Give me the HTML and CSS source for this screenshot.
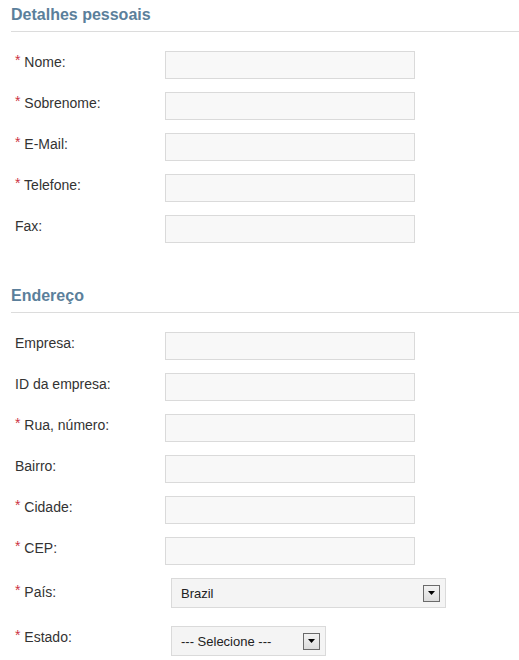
FILE: index.html
```html
<!DOCTYPE html>
<html>
<head>
<meta charset="utf-8">
<link rel="stylesheet" href="styles.css">
</head>
<body>
<div class="page">
  <section class="section">
    <h2 class="heading">Detalhes pessoais</h2>
    <div class="rows">
      <div class="row"><label class="label"><span class="req">*</span> Nome:</label><input class="field" type="text"></div>
      <div class="row"><label class="label"><span class="req">*</span> Sobrenome:</label><input class="field" type="text"></div>
      <div class="row"><label class="label"><span class="req">*</span> E-Mail:</label><input class="field" type="text"></div>
      <div class="row"><label class="label"><span class="req">*</span> Telefone:</label><input class="field" type="text"></div>
      <div class="row"><label class="label">Fax:</label><input class="field" type="text"></div>
    </div>
  </section>
  <section class="section second">
    <h2 class="heading">Endereço</h2>
    <div class="rows">
      <div class="row"><label class="label">Empresa:</label><input class="field" type="text"></div>
      <div class="row"><label class="label">ID da empresa:</label><input class="field" type="text"></div>
      <div class="row"><label class="label"><span class="req">*</span> Rua, número:</label><input class="field" type="text"></div>
      <div class="row"><label class="label">Bairro:</label><input class="field" type="text"></div>
      <div class="row"><label class="label"><span class="req">*</span> Cidade:</label><input class="field" type="text"></div>
      <div class="row"><label class="label"><span class="req">*</span> CEP:</label><input class="field" type="text"></div>
      <div class="row row-select"><label class="label"><span class="req">*</span> País:</label>
        <div class="select wide"><span class="select-text">Brazil</span><span class="arrow"><svg width="7" height="4" viewBox="0 0 7 4"><path d="M0 0h7L3.5 4z" fill="#000"/></svg></span></div>
      </div>
      <div class="row row-select row-last"><label class="label"><span class="req">*</span> Estado:</label>
        <div class="select narrow"><span class="select-text">--- Selecione ---</span><span class="arrow"><svg width="7" height="4" viewBox="0 0 7 4"><path d="M0 0h7L3.5 4z" fill="#000"/></svg></span></div>
      </div>
    </div>
  </section>
</div>
</body>
</html>
```
FILE: styles.css
```css
html, body {
  margin: 0;
  padding: 0;
  background: #fff;
}
.page {
  padding: 0 0 0 11px;
  font-family: "Liberation Sans", Arial, sans-serif;
  color: #333;
}
.section {
  display: block;
}
.second {
  margin-top: 39px;
}
.heading {
  margin: 0;
  padding: 5px 0 6px 0;
  font-size: 16px;
  font-weight: bold;
  line-height: 20px;
  color: #5b7f9b;
  border-bottom: 1px solid #dcdcdc;
}
.rows {
  display: flex;
  flex-direction: column;
  gap: 14px;
  padding-top: 19px;
}
.row {
  display: flex;
  align-items: flex-start;
  height: 27px;
}
.label {
  width: 150px;
  padding-left: 4px;
  font-size: 14px;
  line-height: 16px;
  padding-top: 3px;
  color: #333;
}
.req {
  color: #cc3344;
  position: relative;
  top: -2px;
}
.field {
  box-sizing: border-box;
  width: 250px;
  height: 28px;
  margin: 0;
  border: 1px solid #dadada;
  background: #f8f8f8;
  border-radius: 0;
  padding: 0;
  outline: none;
}
.row-select {
  height: 30px;
}
.row-select .label {
  padding-top: 6px;
}
.row-last {
  margin-top: 4px;
}
.row-last .label {
  padding-top: 3px;
}
.select {
  box-sizing: border-box;
  margin-left: 6px;
  height: 30px;
  border: 1px solid #dadada;
  background: #f4f4f4;
  display: flex;
  align-items: center;
  justify-content: space-between;
  padding: 0 5px 0 9px;
  font-size: 13px;
  color: #222;
}
.wide { width: 275px; }
.narrow { width: 155px; }
.arrow {
  box-sizing: border-box;
  width: 17px;
  height: 17px;
  border: 1px solid #6a6a6a;
  background: linear-gradient(#f2f2f2, #dcdcdc);
  display: flex;
  align-items: center;
  justify-content: center;
}
.arrow svg { display: block; }
```
